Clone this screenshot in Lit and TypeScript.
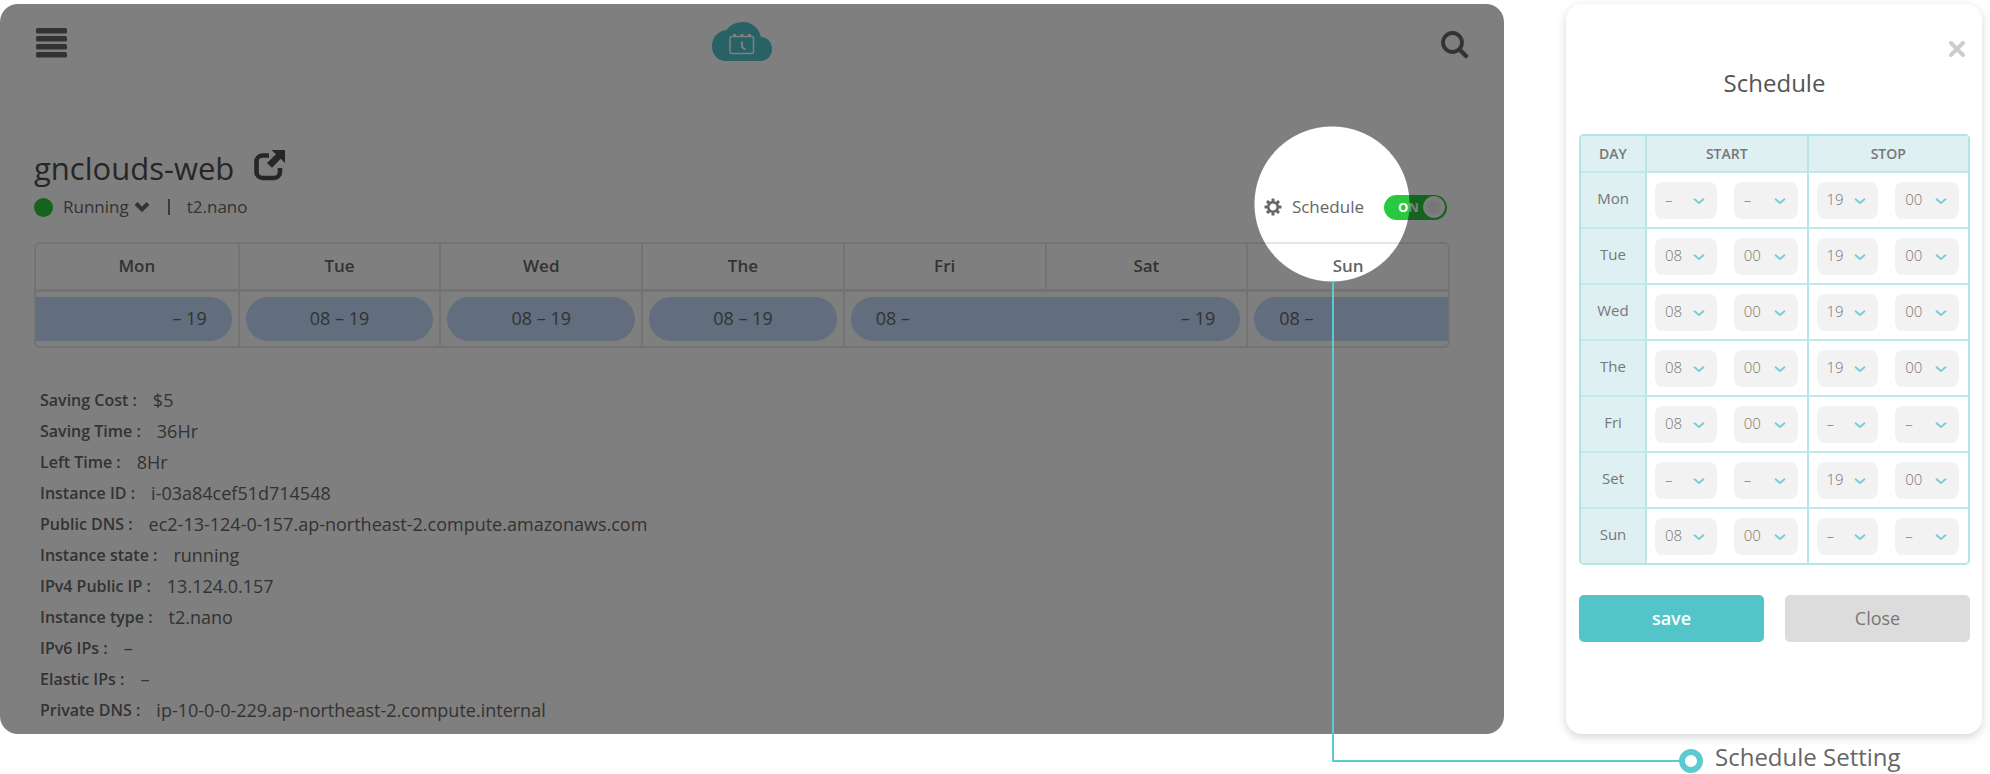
import { LitElement, html, css, svg } from "lit";
import { customElement, property } from "lit/decorators.js";

const HOURS = ["–", ...Array.from({ length: 24 }, (_, i) => String(i).padStart(2, "0"))];
const MINUTES = ["–", "00", "10", "20", "30", "40", "50"];

const GEAR_TEETH = [0, 45, 90, 135, 180, 225, 270, 315];

@customElement("weekly-bar")
class WeeklyBar extends LitElement {
  static styles = css`
    :host { display: block; }
    table {
      width: 100%;
      table-layout: fixed;
      border-collapse: separate;
      border-spacing: 0;
      border: 2px solid #e6e6e6;
      border-radius: 6px;
      overflow: hidden;
    }
    th, td { padding: 0; }
    th {
      box-sizing: border-box;
      height: 45px;
      padding-bottom: 2px;
      font-size: 17px;
      line-height: 24px;
      font-weight: 600;
      color: #666;
    }
    td { height: 57px; border-top: 3px solid #e6e6e6; box-sizing: border-box; }
    th + th, td + td { border-left: 2px solid #e6e6e6; }
    .pill {
      display: flex;
      align-items: center;
      justify-content: center;
      box-sizing: border-box;
      height: 44px;
      margin: 0 6px;
      padding-bottom: 2px;
      border-radius: 22px;
      background: #c4dafa;
      color: #666;
      font-size: 18px;
    }
    .spread { justify-content: space-between; padding-left: 25px; padding-right: 25px; }
    .open-left { justify-content: flex-end; margin-left: 0; padding-right: 25px; border-radius: 0 22px 22px 0; }
    .open-right { justify-content: flex-start; margin-right: 0; padding-left: 25px; border-radius: 22px 0 0 22px; }
  `;

  render() {
    return html`
      <table>
        <thead>
          <tr>${["Mon", "Tue", "Wed", "The", "Fri", "Sat", "Sun"].map((d) => html`<th scope="col">${d}</th>`)}</tr>
        </thead>
        <tbody>
          <tr>
            <td><div class="pill open-left">– 19</div></td>
            <td><div class="pill">08 – 19</div></td>
            <td><div class="pill">08 – 19</div></td>
            <td><div class="pill">08 – 19</div></td>
            <td colspan="2"><div class="pill spread"><span>08 –</span><span>– 19</span></div></td>
            <td><div class="pill open-right">08 –</div></td>
          </tr>
        </tbody>
      </table>
    `;
  }
}

@customElement("time-select")
class TimeSelect extends LitElement {
  @property() value = "–";
  @property() name = "";
  @property({ attribute: false }) options: string[] = [];

  static styles = css`
    :host { display: grid; }
    select, svg { grid-area: 1 / 1; }
    select {
      appearance: none;
      width: 100%;
      height: 37px;
      padding: 0 26px 2px 10px;
      border: 0;
      border-radius: 8px;
      background: #f2f2f2;
      color: #777;
      font: 300 15px "Open Sans", "Noto Sans", sans-serif;
    }
    svg { justify-self: end; align-self: center; width: 12px; height: 8px; margin: 2px 12px 0 0; pointer-events: none; }
  `;

  render() {
    return html`
      <select aria-label=${this.name}>
        ${this.options.map((o) => html`<option ?selected=${o === this.value}>${o}</option>`)}
      </select>
      <svg viewBox="0 0 12 8"><path d="M1 1.700 6 6 11 1.700" fill="none" stroke="#77cfd2" stroke-width="1.900"/></svg>
    `;
  }
}

@customElement("schedule-dialog")
class ScheduleDialog extends LitElement {
  static styles = css`
    :host {
      display: block;
      padding: 24px 12px 92px 13px;
      border-radius: 16px;
      background: #fff;
      box-shadow: 0 3px 10px rgba(0, 0, 0, 0.17);
    }
    .close { display: block; margin-left: auto; width: 42px; height: 42px; padding: 13px; margin-right: -8px; border: 0; background: none; }
    .close svg { display: block; width: 16px; height: 16px; }
    h2 { margin: -6px 0 32px; text-align: center; font-size: 24px; line-height: 38px; font-weight: 400; color: #555; }
    table {
      width: 100%;
      table-layout: fixed;
      border-collapse: separate;
      border-spacing: 0;
      border: 2px solid #b3e4e6;
      border-radius: 5px;
      overflow: hidden;
    }
    .day-col { width: 64px; }
    th, td { padding: 0; box-sizing: border-box; }
    th { background: #def0f2; color: #777; font-size: 15px; line-height: 20px; font-weight: 500; }
    thead th { height: 35px; font-size: 14px; font-weight: 600; }
    tbody th, tbody td { height: 56px; border-top: 2px solid #bfe9ea; }
    tbody th { padding-bottom: 4px; }
    .split { border-left: 2px solid #b8e6e8; }
    tbody td { padding: 0 9px 0 8px; }
    .actions { display: grid; grid-template-columns: 1fr 1fr; gap: 21px; margin-top: 30px; }
    .actions button {
      height: 47px;
      border: 0;
      border-radius: 5px;
      padding: 0 0 2px;
      font: 500 18px "Open Sans", "Noto Sans", sans-serif;
      background: #dcdcdc;
      color: #777;
    }
    .actions .save { background: #53c5c8; color: #fff; font-weight: 600; }
  `;

  private rows = [
    ["Mon", "–", "–", "19", "00"],
    ["Tue", "08", "00", "19", "00"],
    ["Wed", "08", "00", "19", "00"],
    ["The", "08", "00", "19", "00"],
    ["Fri", "08", "00", "–", "–"],
    ["Set", "–", "–", "19", "00"],
    ["Sun", "08", "00", "–", "–"],
  ];

  render() {
    return html`
      <button class="close" aria-label="Close dialog">
        <svg viewBox="0 0 16 16"><path d="M2 2 14 14M14 2 2 14" stroke="#ccc" stroke-width="4" stroke-linecap="round"/></svg>
      </button>
      <h2>Schedule</h2>
      <table>
        <colgroup><col class="day-col" /><col /><col /><col /><col /></colgroup>
        <thead>
          <tr>
            <th scope="col">DAY</th>
            <th scope="col" class="split" colspan="2">START</th>
            <th scope="col" class="split" colspan="2">STOP</th>
          </tr>
        </thead>
        <tbody>
          ${this.rows.map(
            ([day, ...times]) => html`
              <tr>
                <th scope="row">${day}</th>
                ${times.map(
                  (t, i) => html`
                    <td class=${i % 2 ? "" : "split"}>
                      <time-select
                        .value=${t}
                        .options=${i % 2 ? MINUTES : HOURS}
                        .name=${`${day} ${i < 2 ? "start" : "stop"} ${i % 2 ? "minute" : "hour"}`}
                      ></time-select>
                    </td>
                  `
                )}
              </tr>
            `
          )}
        </tbody>
      </table>
      <div class="actions">
        <button class="save">save</button>
        <button>Close</button>
      </div>
    `;
  }
}

@customElement("app-root")
class AppRoot extends LitElement {
  static styles = css`
    :host {
      display: grid;
      grid-template-columns: minmax(0, 1fr) 416px;
      align-content: start;
      column-gap: 62px;
      padding: 4px 8px 0 0;
      background: #fff;
      font-family: "Open Sans", "Noto Sans", sans-serif;
      color: #666;
    }
    .screen { position: relative; padding: 0 54px 3px 34px; }
    .shade {
      position: absolute;
      inset: 0;
      border-radius: 18px;
      pointer-events: none;
      background: radial-gradient(
        circle at calc(100% - 172px) 200px,
        transparent 77px,
        rgba(0, 0, 0, 0.5) 78px
      );
    }
    .connector {
      position: absolute;
      left: calc(100% - 172px);
      right: -175px;
      top: 277px;
      bottom: -28px;
      border: solid #5accd0;
      border-width: 0 0 2px 2px;
      pointer-events: none;
    }
    .topbar { display: grid; grid-template-columns: 1fr auto 1fr; align-items: center; height: 78px; }
    .icon-button { display: block; padding: 0; border: 0; background: none; }
    .icon-button svg, .logo { display: block; }
    .menu { justify-self: start; margin-left: 2px; }
    .logo { margin-bottom: 3px; }
    .search { justify-self: end; margin-right: -19px; padding-top: 3px; }
    .heading { display: flex; align-items: center; gap: 20px; margin-top: 63px; }
    .heading .icon-button { margin-bottom: 6px; }
    h1 { margin: 0; font-size: 31px; line-height: 46px; font-weight: 400; color: #4d4d4d; }
    .status-row { display: flex; align-items: center; justify-content: space-between; height: 32px; margin: 0 3px 19px 0; font-size: 17px; line-height: 24px; }
    .status, .schedule { display: flex; align-items: center; }
    .dot { width: 19px; height: 19px; margin-right: 10px; border-radius: 50%; background: #28c840; }
    .state { display: flex; align-items: center; gap: 5px; padding: 0; border: 0; background: none; font: inherit; color: inherit; }
    .bar { width: 2px; height: 16px; margin: 0 17px 0 18px; background: #777; }
    .schedule a { display: flex; align-items: center; gap: 10px; color: inherit; text-decoration: none; }
    .switch {
      display: flex;
      align-items: center;
      justify-content: space-between;
      box-sizing: border-box;
      width: 63px;
      height: 25px;
      margin-left: 20px;
      padding: 0 2px 0 14px;
      border-radius: 13px;
      background: #28c840;
      color: #fff;
      font-size: 13px;
      font-weight: 700;
    }
    .switch input {
      appearance: none;
      width: 22px;
      height: 22px;
      margin: 0;
      border-radius: 50%;
      background: radial-gradient(circle, #ececec 5px, #fff 9px);
      border: 1px solid #fff;
      box-sizing: border-box;
    }
    dl { margin: 37px 0 0 6px; }
    .fact { display: flex; gap: 16px; font-size: 18px; line-height: 31px; }
    dt { font-size: 16px; font-weight: 600; }
    dd { margin: 0; }
    .caption {
      display: flex;
      align-items: flex-end;
      gap: 12px;
      margin: 6px 0 0 113px;
      font-size: 24px;
      line-height: 33px;
    }
    .ring { box-sizing: border-box; width: 24px; height: 24px; border: 6px solid #5accd0; border-radius: 50%; flex: none; }
  `;

  private facts = [
    ["Saving Cost", "$5"],
    ["Saving Time", "36Hr"],
    ["Left Time", "8Hr"],
    ["Instance ID", "i-03a84cef51d714548"],
    ["Public DNS", "ec2-13-124-0-157.ap-northeast-2.compute.amazonaws.com"],
    ["Instance state", "running"],
    ["IPv4 Public IP", "13.124.0.157"],
    ["Instance type", "t2.nano"],
    ["IPv6 IPs", "–"],
    ["Elastic IPs", "–"],
    ["Private DNS", "ip-10-0-0-229.ap-northeast-2.compute.internal"],
  ];

  render() {
    return html`
      <main class="screen">
        <header class="topbar">
          <button class="icon-button menu" aria-label="Menu">
            <svg width="31" height="30" viewBox="0 0 31 30" fill="#666">
              ${[0, 8, 16, 24].map((y) => svg`<rect y=${y} width="31" height="5.500" rx="1.500"/>`)}
            </svg>
          </button>
          <svg class="logo" width="60" height="39" viewBox="0 0 60 39">
            <path d="M14 39C6 39 0 33 0 24.500 0 15 6 9 14.500 8 18 3 24 0 31 0 40 0 47 6 49 15 55 15 60 20 60 27 60 34 55 39 48 39Z" fill="#53c5c8"/>
            <g fill="none" stroke="#fff" stroke-width="1.500">
              <rect x="18" y="14.500" width="23.500" height="17" rx="2"/>
              <path d="M22.500 12v3M30 12v3M37.500 12v3" stroke-width="3"/>
              <path d="M30 19.500v5.500l3.200 2.500" stroke-width="2"/>
            </g>
          </svg>
          <button class="icon-button search" aria-label="Search">
            <svg width="28" height="28" viewBox="0 0 28 28" fill="none" stroke="#666">
              <circle cx="11.500" cy="11.500" r="9.500" stroke-width="3.800"/>
              <path d="M18.500 18.500 25 25" stroke-width="4.500" stroke-linecap="round"/>
            </svg>
          </button>
        </header>

        <div class="heading">
          <h1>gnclouds-web</h1>
          <button class="icon-button" aria-label="Open in new window">
            <svg width="31" height="31" viewBox="0 0 31 31" fill="#4d4d4d">
              <path d="M15 5.500H8.500a6 6 0 0 0-6 6V22a6 6 0 0 0 6 6H20a6 6 0 0 0 6-6v-4" fill="none" stroke="#4d4d4d" stroke-width="4.600"/>
              <path d="M17.500 0H31v13l-4.300-4.200-8.700 9L13 13l9-8.700Z"/>
            </svg>
          </button>
        </div>

        <div class="status-row">
          <div class="status">
            <span class="dot"></span>
            <button class="state">
              Running
              <svg width="16" height="12" viewBox="0 0 16 12"><path d="M2 2.500 8 8.500 14 2.500" fill="none" stroke="#666" stroke-width="4"/></svg>
            </button>
            <span class="bar"></span>
            <span>t2.nano</span>
          </div>
          <div class="schedule">
            <a href="#schedule">
              <svg width="18" height="18" viewBox="-9 -9 18 18">
                <circle r="4.800" fill="none" stroke="#666" stroke-width="2.600"/>
                ${GEAR_TEETH.map((a) => svg`<rect x="-1.500" y="-8.500" width="3" height="3.200" rx=".6" fill="#666" transform="rotate(${a})"/>`)}
              </svg>
              Schedule
            </a>
            <label class="switch">ON<input type="checkbox" checked /></label>
          </div>
        </div>

        <weekly-bar></weekly-bar>

        <dl>
          ${this.facts.map(([k, v]) => html`<div class="fact"><dt>${k} :</dt><dd>${v}</dd></div>`)}
        </dl>

        <div class="shade"></div>
        <div class="connector"></div>
      </main>
      <schedule-dialog id="schedule"></schedule-dialog>
      <span></span>
      <div class="caption"><span class="ring"></span>Schedule Setting</div>
    `;
  }
}
